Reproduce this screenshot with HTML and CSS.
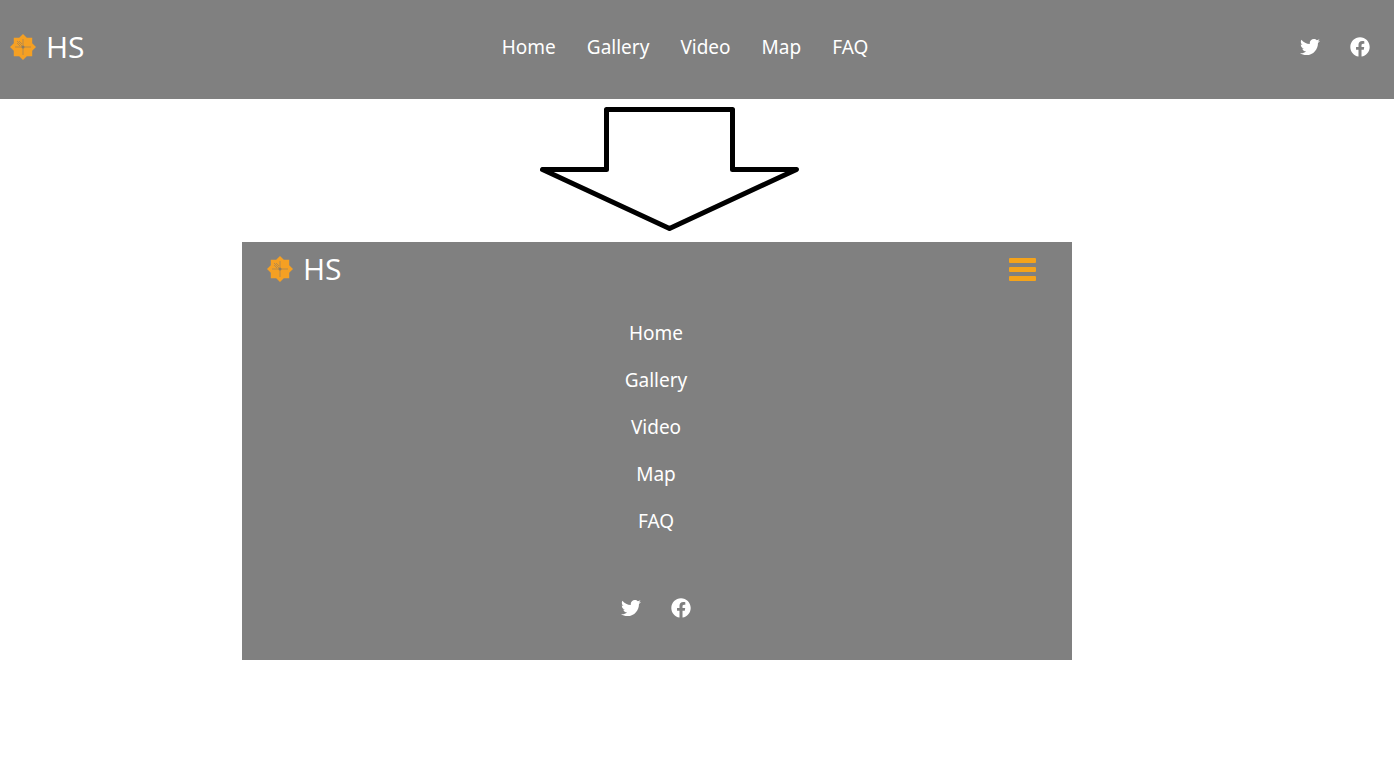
FILE: index.html
```html
<!DOCTYPE html>
<html lang="en">
<head>
<meta charset="utf-8">
<meta name="viewport" content="width=device-width, initial-scale=1">
<title>HS</title>
<link rel="stylesheet" href="styles.css">
</head>
<body>
<svg class="sprite" aria-hidden="true">
  <symbol id="star" viewBox="0 0 26 26">
    <path d="M13 0l3.800 3.800h5.400v5.400L26 13l-3.800 3.800v5.400h-5.400L13 26l-3.800-3.800H3.800v-5.400L0 13l3.800-3.800V3.800h5.400z" fill="#f5a023" stroke-linejoin="round"/>
    <path d="M13 5v16M5 13h16M7 7l5 5M9 7l3 3M7 9l3 3" stroke="#b58a4c" stroke-width="1" fill="none"/>
    <circle cx="13" cy="13" r="1.500" fill="#8d7b60"/>
  </symbol>
  <symbol id="twitter" viewBox="0 0 512 512">
    <path fill="currentColor" d="M459.370 151.716c.325 4.548.325 9.097.325 13.645 0 138.720-105.583 298.558-298.558 298.558-59.452 0-114.680-17.219-161.137-47.106 8.447.974 16.568 1.299 25.340 1.299 49.055 0 94.213-16.568 130.274-44.832-46.132-.975-84.792-31.188-98.112-72.772 6.498.974 12.995 1.624 19.818 1.624 9.421 0 18.843-1.300 27.614-3.573-48.081-9.747-84.143-51.980-84.143-102.985v-1.299c13.969 7.797 30.214 12.670 47.431 13.319-28.264-18.843-46.781-51.005-46.781-87.391 0-19.492 5.197-37.360 14.294-52.954 51.655 63.675 129.300 105.258 216.365 109.807-1.624-7.797-2.599-15.918-2.599-24.040 0-57.828 46.782-104.934 104.934-104.934 30.213 0 57.502 12.670 76.670 33.137 23.715-4.548 46.456-13.320 66.599-25.340-7.798 24.366-24.366 44.833-46.132 57.827 21.117-2.273 41.584-8.122 60.426-16.243-14.292 20.791-32.161 39.308-52.628 54.253z"/>
  </symbol>
  <symbol id="facebook" viewBox="0 0 512 512">
    <path fill="currentColor" d="M504 256C504 119 393 8 256 8S8 119 8 256c0 123.780 90.690 226.380 209.250 245V327.690h-63V256h63v-54.640c0-62.150 37-96.480 93.670-96.480 27.140 0 55.520 4.840 55.520 4.840v61h-31.280c-30.800 0-40.410 19.120-40.410 38.730V256h68.780l-11 71.690h-57.780V501C413.310 482.380 504 379.780 504 256z"/>
  </symbol>
</svg>

<header class="navbar">
  <a class="brand" href="#"><svg class="brand-icon" aria-hidden="true"><use href="#star"/></svg>HS</a>
  <nav aria-label="Main">
    <ul class="menu">
      <li><a href="#">Home</a></li>
      <li><a href="#">Gallery</a></li>
      <li><a href="#">Video</a></li>
      <li><a href="#">Map</a></li>
      <li><a href="#">FAQ</a></li>
    </ul>
  </nav>
  <div class="social">
    <a href="#" aria-label="Twitter"><svg><use href="#twitter"/></svg></a>
    <a href="#" aria-label="Facebook"><svg><use href="#facebook"/></svg></a>
  </div>
</header>

<main class="demo">
  <svg class="arrow" viewBox="0 0 260 124" aria-hidden="true">
    <path d="M66.500 2.500h126v60h64L129.500 121.500 2.500 62.500h64z" fill="#fff" stroke="#000" stroke-width="5" stroke-linejoin="round"/>
  </svg>
  <section class="panel">
    <div class="panel-top">
      <a class="brand" href="#"><svg class="brand-icon" aria-hidden="true"><use href="#star"/></svg>HS</a>
      <button class="toggle" type="button" aria-label="Toggle menu"><span></span><span></span><span></span></button>
    </div>
    <nav aria-label="Compact">
      <ul class="menu menu-stacked">
        <li><a href="#">Home</a></li>
        <li><a href="#">Gallery</a></li>
        <li><a href="#">Video</a></li>
        <li><a href="#">Map</a></li>
        <li><a href="#">FAQ</a></li>
      </ul>
    </nav>
    <div class="social social-center">
      <a href="#" aria-label="Twitter"><svg><use href="#twitter"/></svg></a>
      <a href="#" aria-label="Facebook"><svg><use href="#facebook"/></svg></a>
    </div>
  </section>
</main>
</body>
</html>
```

FILE: styles.css
```css
* {
  box-sizing: border-box;
}

body {
  margin: 0;
  background: #fff;
  color: #fff;
  font-family: "Noto Sans", "Open Sans", sans-serif;
  font-size: 19px;
}

a {
  color: inherit;
  text-decoration: none;
}

.sprite {
  display: none;
}

.navbar {
  display: grid;
  grid-template-columns: 1fr auto 1fr;
  align-items: center;
  padding: 21px 24px 27px 0;
  background: #808080;
}

.navbar .brand {
  padding-left: 10px;
  line-height: 51px;
}

.brand {
  display: flex;
  align-items: center;
  gap: 10px;
  font-family: "Open Sans", "Noto Sans", sans-serif;
  font-size: 30px;
  font-weight: 400;
  line-height: 54px;
}

.brand-icon {
  width: 26px;
  height: 26px;
}

.menu {
  display: flex;
  gap: 31px;
  margin: 0;
  padding: 0;
  list-style: none;
  line-height: 28px;
}

.menu-stacked {
  flex-direction: column;
  align-items: center;
  gap: 19px;
  padding: 23px 0 63px;
}

.social {
  display: flex;
  justify-content: flex-end;
  gap: 30px;
}

.social-center {
  justify-content: center;
}

.social svg {
  display: block;
  width: 20px;
  height: 20px;
}

.demo {
  max-width: 1072px;
  padding: 8px 0 24px 242px;
}

.arrow {
  display: block;
  width: 260px;
  height: 124px;
  margin: 0 auto 11px 298px;
}

.panel {
  padding: 0 2px 42px 0;
  background: #808080;
}

.panel-top {
  display: flex;
  align-items: center;
  justify-content: space-between;
  padding: 0 34px 0 25px;
}

.toggle {
  display: grid;
  gap: 4px;
  width: 27px;
  padding: 0;
  border: 0;
  background: none;
  cursor: pointer;
}

.toggle span {
  height: 5px;
  border-radius: 1px;
  background: #f5a31a;
}
```
